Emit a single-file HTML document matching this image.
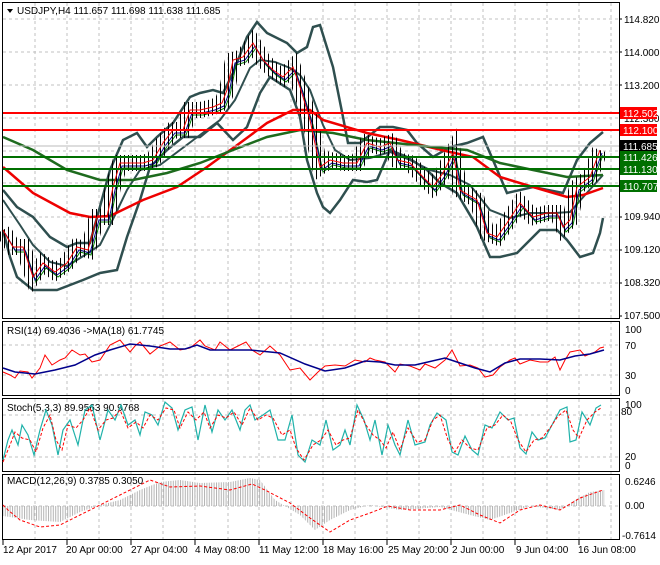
<!DOCTYPE html>
<html><head><meta charset="utf-8"><style>
body{margin:0;background:#fff;width:660px;height:560px;overflow:hidden;font-family:"Liberation Sans",sans-serif}
text{font-family:"Liberation Sans",sans-serif;font-size:10px;fill:#000}
</style></head><body>
<svg width="660" height="560" viewBox="0 0 660 560" xmlns="http://www.w3.org/2000/svg">
<defs>
<pattern id="hb" width="2.4" height="10" patternUnits="userSpaceOnUse"><rect x="0" y="0" width="1" height="10" fill="#b4b4b4"/></pattern>
<pattern id="bars" width="4" height="10" patternUnits="userSpaceOnUse"><rect x="0" y="0" width="1" height="10" fill="#000"/></pattern>
</defs>
<rect width="660" height="560" fill="#fff"/>
<g stroke="#c0c0c0" stroke-dasharray="3,3" stroke-width="1">
<path d="M35 3V540M67 3V540M99 3V540M131 3V540M163 3V540M195 3V540M228 3V540M259 3V540M291 3V540M323 3V540M355 3V540M387 3V540M419 3V540M451 3V540M483 3V540M515 3V540M547 3V540M579 3V540M611 3V540"/>
<path d="M3 19H619M3 52H619M3 85H619M3 118H619M3 151H619M3 183H619M3 217H619M3 250H619M3 283H619"/>
<path d="M3 345H619M3 375H619M3 415H619M3 457H619M3 506H619"/>
</g>
<g fill="none">
<polyline stroke="#2f4f4f" stroke-width="2.5" points="3,190 17,207 33,217 50,237 67,247 77,243 90,243 110,170 123,140 137,133 147,147 157,137 173,123 190,97 200,93 213,90 223,93 233,73 247,37 257,22 267,33 287,43 297,53 307,47 313,27 320,25 333,67 343,117 348,143 360,143 380,127 393,127 407,130 417,143 433,157 450,147 467,143 483,137 493,160 507,193 533,187 563,193 577,160 590,143 603,132"/>
<polyline stroke="#2f4f4f" stroke-width="2.5" points="3,230 10,257 17,277 33,290 57,290 83,280 100,273 117,270 127,237 140,200 150,167 167,150 183,137 200,137 217,123 233,140 247,127 260,93 270,77 290,90 300,117 307,160 317,193 323,207 330,213 340,200 353,180 367,182 377,180 390,150 407,157 427,170 440,183 457,193 477,227 490,257 500,257 517,253 527,243 540,230 557,230 567,240 580,257 593,253 600,233 603,218"/>
<polyline stroke="#2f4f4f" stroke-width="2" points="3,200 20,225 33,245 50,262 67,266 85,255 100,245 115,215 127,190 140,170 160,165 180,150 200,135 220,120 235,100 250,68 260,60 275,62 290,68 300,75 310,90 323,125 335,150 350,160 370,158 390,152 410,160 430,170 450,175 470,185 490,210 510,218 530,213 555,213 570,212 585,195 603,175"/>
<polyline stroke="#e00" stroke-width="2.5" points="3,167 33,193 70,213 90,217 110,216 143,200 177,187 207,167 240,143 267,123 293,110 310,110 323,120 367,133 400,140 450,152 473,157 500,177 533,187 567,197 583,195 603,188"/>
<polyline stroke="#1e6b1e" stroke-width="2.5" points="3,137 33,150 67,170 100,180 133,180 167,173 200,163 233,150 267,137 300,130 333,133 367,140 433,147 467,150 500,163 533,170 567,177 603,175"/>
<polyline stroke="#008000" stroke-width="1" transform="translate(3,5)" points="3,230 13,247 23,247 33,277 43,263 55,272 67,263 77,247 88,250 97,217 107,217 113,187 120,163 133,163 143,163 153,160 163,143 173,130 183,130 190,110 200,110 213,107 222,103 227,90 233,60 243,57 253,43 263,60 273,70 283,77 293,67 300,87 310,120 320,167 330,160 343,163 357,163 367,143 380,147 390,143 397,160 410,163 423,177 433,187 443,173 453,153 460,190 477,200 487,233 497,237 507,223 520,203 533,217 547,213 557,213 563,227 570,220 577,187 590,177 600,150"/>
<polyline stroke="#00008b" stroke-width="1" transform="translate(2,3)" points="3,230 13,247 23,247 33,277 43,263 55,272 67,263 77,247 88,250 97,217 107,217 113,187 120,163 133,163 143,163 153,160 163,143 173,130 183,130 190,110 200,110 213,107 222,103 227,90 233,60 243,57 253,43 263,60 273,70 283,77 293,67 300,87 310,120 320,167 330,160 343,163 357,163 367,143 380,147 390,143 397,160 410,163 423,177 433,187 443,173 453,153 460,190 477,200 487,233 497,237 507,223 520,203 533,217 547,213 557,213 563,227 570,220 577,187 590,177 600,150"/>
<polyline stroke="url(#bars)" stroke-width="16" points="3,230 13,247 23,247 33,277 43,263 55,272 67,263 77,247 88,250 97,217 107,217 113,187 120,163 133,163 143,163 153,160 163,143 173,130 183,130 190,110 200,110 213,107 222,103 227,90 233,60 243,57 253,43 263,60 273,70 283,77 293,67 300,87 310,120 320,167 330,160 343,163 357,163 367,143 380,147 390,143 397,160 410,163 423,177 433,187 443,173 453,153 460,190 477,200 487,233 497,237 507,223 520,203 533,217 547,213 557,213 563,227 570,220 577,187 590,177 600,150"/>
<polyline stroke="#e00" stroke-width="1" points="3,230 13,247 23,247 33,277 43,263 55,272 67,263 77,247 88,250 97,217 107,217 113,187 120,163 133,163 143,163 153,160 163,143 173,130 183,130 190,110 200,110 213,107 222,103 227,90 233,60 243,57 253,43 263,60 273,70 283,77 293,67 300,87 310,120 320,167 330,160 343,163 357,163 367,143 380,147 390,143 397,160 410,163 423,177 433,187 443,173 453,153 460,190 477,200 487,233 497,237 507,223 520,203 533,217 547,213 557,213 563,227 570,220 577,187 590,177 600,150"/>
</g>
<path d="M3 146H619" stroke="#bbb" stroke-width="1"/>
<g stroke-width="2">
<path d="M3 113H619M3 130H619" stroke="#f00"/>
<path d="M3 157H619M3 169H619M3 186H619" stroke="#007000"/>
</g>
<g fill="none" stroke="#000" stroke-width="1">
<rect x="2.5" y="2.5" width="617" height="316"/>
<rect x="2.5" y="321.5" width="617" height="74"/>
<rect x="2.5" y="398.5" width="617" height="73"/>
<rect x="2.5" y="474.5" width="617" height="65"/>
</g>
<path d="M7 9l6 0-3 4z" fill="#000"/>
<text x="17" y="14">USDJPY,H4  111.657 111.698 111.638 111.685</text>
<g stroke="#000"><path d="M619 19H622M619 52H622M619 85H622M619 118H622M619 217H622M619 250H622M619 283H622M619 316H622"/></g>
<text x="624" y="23" font-size="9">114.820</text>
<text x="624" y="56" font-size="9">114.000</text>
<text x="624" y="89" font-size="9">113.200</text>
<text x="624" y="122" font-size="9">112.380</text>
<text x="624" y="220" font-size="9">109.940</text>
<text x="624" y="253" font-size="9">109.120</text>
<text x="624" y="286" font-size="9">108.320</text>
<text x="624" y="319" font-size="9">107.500</text>
<g>
<rect x="620" y="107" width="37" height="12" fill="#f00"/><text x="623" y="117" style="fill:#fff;font-size:10px">112.502</text>
<rect x="620" y="124" width="37" height="12" fill="#f00"/><text x="623" y="134" style="fill:#fff;font-size:10px">112.100</text>
<rect x="620" y="140" width="37" height="12" fill="#000"/><text x="623" y="150" style="fill:#fff;font-size:10px">111.685</text>
<rect x="620" y="151" width="37" height="12" fill="#007000"/><text x="623" y="161" style="fill:#fff;font-size:10px">111.426</text>
<rect x="620" y="163" width="37" height="12" fill="#007000"/><text x="623" y="173" style="fill:#fff;font-size:10px">111.130</text>
<rect x="620" y="180" width="37" height="12" fill="#007000"/><text x="623" y="190" style="fill:#fff;font-size:10px">110.707</text>
</g>
<text x="7" y="334" font-size="9">RSI(14) 69.4036  -&gt;MA(18) 61.7745</text>
<polyline fill="none" stroke="#f00" stroke-width="1" points="3,372 10,375 15,378 20,371 28,372 32,378 40,368 45,355 52,365 60,360 65,358 72,350 80,355 85,354 92,362 100,360 110,345 120,340 130,352 135,346 140,342 150,354 160,346 170,342 180,350 190,348 200,340 205,346 215,350 220,342 230,350 240,345 246,342 252,350 260,355 270,346 280,355 290,370 300,368 310,380 318,372 325,366 335,365 345,366 355,360 365,362 370,358 375,360 385,362 395,372 400,364 410,366 420,370 425,364 435,368 445,360 452,350 460,366 470,365 478,368 485,377 493,375 500,367 510,360 515,358 520,364 530,360 540,362 548,362 555,357 560,370 565,360 570,352 580,350 585,356 595,352 600,348 604,347"/>
<polyline fill="none" stroke="#00008b" stroke-width="1.5" points="3,368 15,372 35,374 55,370 75,365 95,355 110,350 130,344 150,346 170,349 185,349 197,345 210,350 230,350 250,350 280,353 305,364 325,371 345,368 365,361 380,362 395,365 415,365 445,358 460,363 475,368 490,372 505,363 520,359 540,359 560,360 575,356 590,354 604,350"/>
<text x="625" y="333" font-size="9">100</text><text x="625" y="349" font-size="9">70</text><text x="625" y="379" font-size="9">30</text><text x="625" y="394" font-size="9">0</text>
<text x="7" y="411" font-size="9">Stoch(5,3,3) 89.9563 90.9768</text>
<polyline fill="none" stroke="#20b2aa" stroke-width="1.2" points="3,460 8,440 12,430 18,445 22,425 28,435 34,455 40,430 46,410 52,425 58,455 63,430 70,420 78,445 85,410 92,405 100,440 108,410 115,420 121,405 128,425 135,420 140,435 145,412 152,415 158,425 165,402 172,408 178,430 185,410 192,407 198,440 205,405 212,432 218,410 225,420 232,410 240,430 245,410 250,405 255,420 263,415 270,410 278,440 285,440 292,415 298,455 305,462 312,440 320,445 326,420 333,450 340,445 345,430 350,445 357,405 364,420 370,440 375,420 382,455 388,425 395,445 400,455 408,420 415,445 425,442 430,425 437,413 446,420 452,452 458,455 465,436 472,450 478,455 485,425 492,428 500,412 508,420 514,418 520,448 526,454 532,432 538,440 545,438 552,425 560,410 567,407 570,442 576,440 582,412 590,425 596,408 601,405"/>
<polyline fill="none" stroke="#f00" stroke-width="1" stroke-dasharray="3,2" points="3,462 10,445 15,432 22,438 30,440 36,452 43,428 50,415 56,440 62,450 68,425 76,428 83,420 90,408 98,430 106,420 113,418 120,410 128,428 136,422 143,428 150,415 158,420 166,408 174,410 180,428 188,412 196,420 204,412 210,428 218,415 226,418 234,412 242,425 250,408 258,420 266,415 273,418 282,435 290,430 296,448 304,460 313,445 321,440 328,430 336,445 343,440 350,438 358,410 366,425 373,435 380,440 386,448 393,432 400,450 408,428 417,442 425,440 433,420 440,415 448,440 455,452 462,440 470,448 478,450 487,428 495,425 503,415 511,422 518,440 526,452 534,440 542,438 550,428 558,416 566,410 573,430 579,438 587,420 595,412 601,408"/>
<text x="625" y="408" font-size="9">100</text><text x="621" y="415" font-size="9">80</text><text x="625" y="460" font-size="9">20</text><text x="625" y="469" font-size="9">0</text>
<polygon fill="url(#hb)" points="3,506 3,516 30,520 60,522 80,512 100,505 120,500 140,490 160,482 180,480 200,483 230,482 250,478 260,480 275,500 285,506 300,515 315,530 330,520 350,510 370,505 400,510 440,507 470,515 490,520 510,513 530,506 560,510 575,500 590,492 605,490 605,506"/>
<polyline fill="none" stroke="#f00" stroke-width="1" stroke-dasharray="3,2" points="3,505 8,510 20,520 40,527 60,525 80,515 100,505 120,495 140,485 150,480 170,487 200,486 230,490 252,484 265,490 290,503 310,518 330,532 350,520 370,513 388,506 410,510 440,510 460,505 480,515 500,523 520,510 540,505 560,510 580,498 603,490"/>
<text x="7" y="484" font-size="9">MACD(12,26,9) 0.3785 0.3050</text>
<text x="625" y="485" font-size="9">0.6246</text><text x="625" y="509" font-size="9">0.00</text><text x="622" y="539" font-size="9">-0.7614</text>
<g stroke="#000"><path d="M3 540V545M67 540V545M131 540V545M195 540V545M259 540V545M323 540V545M387 540V545M451 540V545M515 540V545M579 540V545"/></g>
<text x="3" y="553" font-size="9">12 Apr 2017</text>
<text x="66" y="553" font-size="9">20 Apr 00:00</text>
<text x="131" y="553" font-size="9">27 Apr 04:00</text>
<text x="195" y="553" font-size="9">4 May 08:00</text>
<text x="259" y="553" font-size="9">11 May 12:00</text>
<text x="323" y="553" font-size="9">18 May 16:00</text>
<text x="388" y="553" font-size="9">25 May 20:00</text>
<text x="452" y="553" font-size="9">2 Jun 00:00</text>
<text x="516" y="553" font-size="9">9 Jun 04:00</text>
<text x="578" y="553" font-size="9">16 Jun 08:00</text>
</svg>
</body></html>
